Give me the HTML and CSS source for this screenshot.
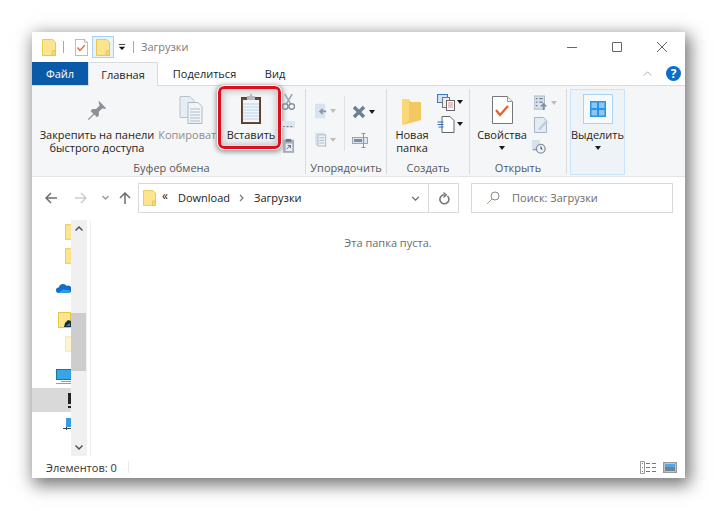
FILE: index.html
```html
<!DOCTYPE html>
<html lang="ru">
<head>
<meta charset="utf-8">
<title>Загрузки</title>
<link rel="stylesheet" href="styles.css">
</head>
<body>
<svg class="defs" width="0" height="0">
  <symbol id="folder" viewBox="0 0 15 18"><path d="M.5.5h11l3 3v14H.5z" fill="#fde58f" stroke="#e9c342"/><path d="M11 12.5h3.5v5H11z" fill="#f6d978" stroke="#e9c342"/></symbol>
  <symbol id="doccheck" viewBox="0 0 21 28"><path d="M.5.5h15l5 5v22H.5z" fill="#fff" stroke="#777"/><path d="M15.5.5v5h5" fill="#eee" stroke="#999"/><path d="M4 14l4 5 8-9" fill="none" stroke="#e8602c" stroke-width="2.2"/></symbol>
</svg>
<div class="window">
  <header class="titlebar">
    <svg class="qa-folder"><use href="#folder"/></svg>
    <span class="qa-sep"></span>
    <svg class="qa-check" viewBox="0 0 21 28"><use href="#doccheck"/></svg>
    <span class="qa-box"><svg class="qa-folder2"><use href="#folder"/></svg></span>
    <svg class="qa-arrow" viewBox="0 0 10 8"><path d="M1 0h8v1H1zM1 3h8L5 7z" fill="#111"/></svg>
    <span class="qa-sep qa-sep2"></span>
    <span class="title">Загрузки</span>
    <div class="controls">
      <svg viewBox="0 0 10 10"><path d="M0 5.5h10" stroke="#666" fill="none"/></svg>
      <svg viewBox="0 0 10 10"><path d="M.5.5h9v9h-9z" stroke="#666" fill="none"/></svg>
      <svg viewBox="0 0 10 10"><path d="M0 0l10 10M10 0L0 10" stroke="#666" fill="none"/></svg>
    </div>
  </header>
  <nav class="tabs">
    <span class="tab file">Файл</span>
    <span class="tab active">Главная</span>
    <span class="tab share">Поделиться</span>
    <span class="tab view">Вид</span>
    <svg class="collapse" viewBox="0 0 10 6"><path d="M.5 5.5L5 1l4.5 4.5" fill="none" stroke="#999"/></svg>
    <span class="help">?</span>
  </nav>
  <section class="ribbon">
    <div class="group g-clip">
      <div class="g-body">
        <div class="btn pin">
          <svg class="big" viewBox="0 0 24 24"><path d="M14 2l8 8-2 1-2-1-4 4v4l-2 2-3-3-6 6-1-1 6-6-3-3 2-2h4l4-4-1-2z" fill="#8a9097"/></svg>
          <span class="lbl">Закрепить на панели<br>быстрого доступа</span>
        </div>
        <div class="btn copy">
          <svg class="big" viewBox="0 0 24 28"><path d="M1 .5h10l4 4v17H1z" fill="#e6edf5" stroke="#b9c3ce"/><path d="M9 6.5h10l4 4v17H9z" fill="#f2f5f8" stroke="#aeb8c3"/><path d="M11 13h10M11 16h10M11 19h10M11 22h10M11 25h10" stroke="#b0bac6"/></svg>
          <span class="lbl dim">Копировать</span>
        </div>
        <div class="btn paste">
          <svg class="big" viewBox="0 0 20 30"><rect x=".5" y="3.5" width="19" height="26" fill="#6e4b33" stroke="#5c3c28"/><rect x="2" y="6" width="16" height="22" fill="#f2f6fc"/><path d="M2 10h16M2 13h16M2 16h16M2 19h16M2 22h16M2 25h16" stroke="#bcd2ec"/><path d="M6 2h3V0h2v2h3v4H6z" fill="#b9bcc0"/></svg>
          <span class="lbl">Вставить</span>
        </div>
        <div class="small-col">
          <svg viewBox="0 0 14 18"><path d="M3 0l6 10M11 0L5 10" stroke="#9aa5b0" stroke-width="1.6" fill="none"/><circle cx="3.5" cy="13.5" r="3" fill="none" stroke="#7d8f9f" stroke-width="1.5"/><circle cx="10.5" cy="13.5" r="3" fill="none" stroke="#7d8f9f" stroke-width="1.5"/></svg>
          <svg viewBox="0 0 14 8"><rect width="14" height="8" fill="#dfe5ec"/><path d="M1 6h2M5 6h2M9 6h2" stroke="#5e6a76"/></svg>
          <svg viewBox="0 0 14 16"><rect x="1" y="2" width="12" height="14" fill="#a4aeb9"/><path d="M4 1h6v3H4z" fill="#6d7884"/><rect x="4" y="6" width="7" height="8" fill="#eef2f6"/><path d="M5 12l4-4M6 8h3v3" stroke="#4f6070" fill="none"/></svg>
        </div>
      </div>
      <div class="g-label">Буфер обмена</div>
      <div class="highlight"></div>
    </div>
    <div class="group g-arr">
      <div class="g-body">
        <div class="arr-col">
          <div class="mini">
            <svg viewBox="0 0 14 17"><rect width="12" height="17" fill="#d7e3f0"/><path d="M13 9H7M9 6L6 9l3 3" stroke="#8b98a6" stroke-width="2" fill="none"/></svg>
            <i class="tri dim-tri"></i>
          </div>
          <div class="mini">
            <svg viewBox="0 0 14 17"><rect width="11" height="15" fill="#d7e3f0"/><rect x="3.500" y="2.500" width="9" height="13" fill="#eef3f8" stroke="#a7b3bf"/><path d="M5 6h6M5 9h6M5 12h6" stroke="#a7b3bf"/></svg>
            <i class="tri dim-tri"></i>
          </div>
        </div>
        <span class="arr-sep"></span>
        <div class="arr-col">
          <div class="mini">
            <svg class="x-icon" viewBox="0 0 14 14"><path d="M2 2l10 10M12 2L2 12" stroke="#6c7f95" stroke-width="3.400"/></svg>
            <i class="tri"></i>
          </div>
          <div class="mini">
            <svg class="rename" viewBox="0 0 16 15"><rect x=".5" y="4.500" width="15" height="6" fill="#dce4ec" stroke="#9aa8b6"/><rect x="2" y="6" width="8" height="3" fill="#7f8e9d"/><path d="M11.500 0v15M9.500.5h4M9.500 14.500h4" stroke="#8896a4"/></svg>
          </div>
        </div>
      </div>
      <div class="g-label">Упорядочить</div>
    </div>
    <div class="group g-new">
      <div class="g-body">
        <div class="btn newf">
          <svg class="big" viewBox="0 0 19 28"><path d="M0 1h7l2 3v19l-8 4-1-1z" fill="#fbd777"/><path d="M7 4h12v18L1 27l6-4z" fill="#f2c85f"/></svg>
          <span class="lbl">Новая<br>папка</span>
        </div>
        <div class="new-col">
          <div class="mini">
            <svg viewBox="0 0 18 17"><rect x=".5" y=".5" width="10" height="8" fill="#cfe2f5" stroke="#3d7ab8"/><rect x="5.500" y="3.500" width="7" height="10" fill="#eee" stroke="#777"/><rect x="9.500" y="6.500" width="8" height="10" fill="#fff" stroke="#666"/><path d="M11 9h5M11 11h5M11 13h5" stroke="#d88"/></svg>
            <i class="tri"></i>
          </div>
          <div class="mini">
            <svg viewBox="0 0 17 17"><path d="M4.500.5h8l4 4v12h-12z" fill="#fff" stroke="#666"/><path d="M0 6h6M0 8.500h6M1 11h5" stroke="#2e6eb0"/></svg>
            <i class="tri"></i>
          </div>
        </div>
      </div>
      <div class="g-label">Создать</div>
    </div>
    <div class="group g-open">
      <div class="g-body">
        <div class="btn props">
          <svg class="big" viewBox="0 0 21 28"><use href="#doccheck"/></svg>
          <span class="lbl">Свойства</span>
          <i class="tri"></i>
        </div>
        <div class="open-col">
          <div class="mini">
            <svg viewBox="0 0 16 16"><rect width="12" height="15" fill="#d9e2ec" stroke="#a5b1bd"/><path d="M2 3h2M2 7h2M2 11h2M6 3h4M6 7h4" stroke="#6f7f8f" stroke-width="1.500"/><path d="M11 16v-6M8 12l3-3 3 3" stroke="#7f8f9f" stroke-width="2" fill="none"/></svg>
            <i class="tri dim-tri"></i>
          </div>
          <div class="mini">
            <svg viewBox="0 0 14 16"><path d="M.5.5h9l3 3v12H.5z" fill="#e3ecf5" stroke="#a8b5c2"/><path d="M4 12l8-9 2 2-8 8z" fill="#c3ccd5"/></svg>
          </div>
          <div class="mini hist">
            <svg viewBox="0 0 16 16"><rect width="9" height="12" fill="#d7e1eb"/><circle cx="10" cy="10" r="5" fill="#eef2f6" stroke="#8795a3" stroke-width="1.500"/><path d="M10 7v3l2 1M1 11h5" stroke="#7a8896"/></svg>
          </div>
        </div>
      </div>
      <div class="g-label">Открыть</div>
    </div>
    <div class="select-btn">
      <span class="sel-box">
        <svg viewBox="0 0 16 16"><rect width="16" height="16" fill="#2b94e4"/><path d="M1.500 1.500h5.500V7H1.500zM9 1.500h5.500V7H9zM1.500 9H7v5.500H1.500zM9 9h5.500v5.500H9z" fill="#8cc6f2"/></svg>
      </span>
      <span class="lbl">Выделить</span>
      <i class="tri"></i>
    </div>
  </section>
  <div class="navbar">
    <svg class="nav-i back" viewBox="0 0 12 12"><path d="M12 6H1.500M6 1L1 6l5 5" fill="none" stroke="#6d6d6d" stroke-width="1.500"/></svg>
    <svg class="nav-i fwd" viewBox="0 0 12 12"><path d="M0 6h10.500M6 1l5 5-5 5" fill="none" stroke="#ccc" stroke-width="1.500"/></svg>
    <svg class="nav-d" viewBox="0 0 7 5"><path d="M.5 1l3 3 3-3" fill="none" stroke="#999" stroke-width="1.300"/></svg>
    <svg class="nav-i up" viewBox="0 0 12 12"><path d="M6 12V1.500M1 6l5-5 5 5" fill="none" stroke="#6d6d6d" stroke-width="1.500"/></svg>
    <div class="address">
      <svg class="addr-f"><use href="#folder"/></svg>
      <span class="crumb-more">«</span>
      <span class="crumb">Download</span>
      <svg class="crumb-sep" viewBox="0 0 5 8"><path d="M1 1l3 3-3 3" fill="none" stroke="#777" stroke-width="1.200"/></svg>
      <span class="crumb">Загрузки</span>
      <svg class="addr-d" viewBox="0 0 10 6"><path d="M1 1l4 4 4-4" fill="none" stroke="#666" stroke-width="1.500"/></svg>
      <span class="refresh">
        <svg viewBox="0 0 12 13"><path d="M9.500 4A4.500 4.500 0 1 1 5 3H7" fill="none" stroke="#777" stroke-width="1.600"/><path d="M5.500.5L8.500 3 5.500 5.500" fill="none" stroke="#777" stroke-width="1.200"/></svg>
      </span>
    </div>
    <div class="search">
      <svg viewBox="0 0 14 14"><circle cx="9" cy="5" r="4" fill="none" stroke="#8a8a8a"/><path d="M6 8l-5 5" stroke="#b5a07a"/></svg>
      <span class="search-text">Поиск: Загрузки</span>
    </div>
  </div>
  <main class="main">
    <aside class="sidebar">
      <div class="tree">
        <div class="row"><svg class="t-folder"><use href="#folder"/></svg></div>
        <div class="row"><svg class="t-folder"><use href="#folder"/></svg></div>
        <div class="row gap"><svg class="t-cloud" viewBox="0 0 17 12"><path d="M3 11a3 3 0 0 1 0-6 5 5 0 0 1 9-2 4 4 0 0 1 3 8z" fill="#0f6fc6"/><path d="M2 11l6-4 8 1v3z" fill="#2c9bea"/></svg></div>
        <div class="row gap"><svg class="t-shared" viewBox="0 0 13 16"><path d="M.5.5h12v15H.5z" fill="#fde58f" stroke="#e9c342"/><path d="M6 15l1-4 3-3 3 1v6z" fill="#1a2a3a"/><path d="M8 14l4-3v3z" fill="#2a8ee0"/></svg></div>
        <div class="row"><svg class="t-folder pale"><use href="#folder"/></svg></div>
        <div class="row gap"><svg class="t-pc" viewBox="0 0 15 15"><rect x=".5" y=".5" width="18" height="10" fill="#35a7e8" stroke="#1f6f9f"/><path d="M5 12h10v1H5zM0 14h15v1H0z" fill="#8fa0b0"/></svg></div>
        <div class="row sel"><span class="t-dl"></span></div>
        <div class="row"><svg class="t-net" viewBox="0 0 8 13"><path d="M3 0h5v9H3z" fill="#3a9be0"/><path d="M0 10h8v1H0zM3 9h1v3H3z" fill="#444"/></svg></div>
      </div>
      <div class="scrollbar">
        <svg class="sb-up" viewBox="0 0 8 5"><path d="M.5 4.500L4 1l3.500 3.500" fill="none" stroke="#555" stroke-width="1.500"/></svg>
        <span class="thumb"></span>
        <svg class="sb-down" viewBox="0 0 8 5"><path d="M.5.5L4 4 7.500.5" fill="none" stroke="#555" stroke-width="1.500"/></svg>
      </div>
    </aside>
    <div class="content">Эта папка пуста.</div>
  </main>
  <footer class="status">
    <span class="count">Элементов: 0</span>
    <span class="st-sep"></span>
    <svg class="st-details" viewBox="0 0 16 13"><path d="M.5.500h4v12h-4z" fill="#fff" stroke="#999"/><path d="M2 2h1v1H2z" fill="#3a7"/><path d="M2 6h1v1H2z" fill="#39e"/><path d="M2 10h1v1H2z" fill="#e33"/><path d="M6 2.500h4M12 2.500h4M6 6.500h4M12 6.500h4M6 10.500h4M12 10.500h4" stroke="#777"/></svg>
    <svg class="st-large" viewBox="0 0 14 11"><rect x=".75" y=".75" width="12.500" height="9.500" fill="#eaf3fb" stroke="#999" stroke-width="1.500"/><rect x="2" y="2" width="10" height="3" fill="#55a5e8"/><rect x="2" y="5" width="10" height="4" fill="#6b8592"/></svg>
  </footer>
</div>
</body>
</html>
```
FILE: styles.css
```css
* { box-sizing: border-box; }
html, body { margin: 0; height: 100%; background: #fff; overflow: hidden; }
body { padding: 32px 0 0 32px; font-family: "Open Sans", "Noto Sans", sans-serif; font-size: 11px; color: #1e1e1e; }
.defs { position: absolute; }
svg { display: block; flex: none; }
.window { width: 653px; height: 446px; background: #fff; display: flex; flex-direction: column; box-shadow: 3px 5px 16px 2px rgba(0,0,0,.55); }

.titlebar { height: 30px; display: flex; align-items: center; padding: 0 0 0 10px; flex: none; }
.qa-folder { width: 14px; height: 17px; }
.qa-sep { width: 1px; height: 12px; background: #a8a8a8; margin-left: 7px; }
.qa-check { width: 13px; height: 17px; margin-left: 11px; }
.qa-box { width: 22px; height: 22px; margin-left: 4px; border: 1px solid #a6d0f5; background: #e8f3fd; display: flex; align-items: center; justify-content: center; }
.qa-folder2 { width: 14px; height: 17px; }
.qa-arrow { width: 8px; height: 7px; margin-left: 4px; }
.qa-sep2 { margin-left: 7px; }
.title { margin-left: 7px; margin-top: -2px; color: #7b7b7b; font-size: 11px; }
.controls { margin-left: auto; display: flex; gap: 35px; padding-right: 18px; }
.controls svg { width: 10px; height: 10px; }

.tabs { height: 24px; display: flex; align-items: center; position: relative; flex: none; border-bottom: 1px solid #dadbdc; }
.tab { height: 23px; display: flex; align-items: center; justify-content: center; }
.file { width: 56px; background: #0b5aa8; color: #fff; }
.active { width: 70px; height: 24px; background: #f5f6f7; border: 1px solid #dadbdc; border-bottom: 0; margin-bottom: -1px; }
.share { margin-left: 15px; width: 63px; }
.view { margin-left: 29px; width: 20px; }
.collapse { width: 9px; height: 5px; margin-left: auto; margin-right: 14px; }
.help { width: 15px; height: 15px; border-radius: 50%; background: #0a6fc9; color: #fff; font: bold 12px/15px "Open Sans", sans-serif; text-align: center; margin-right: 4px; }

.ribbon { height: 91px; background: #f5f6f7; display: flex; flex: none; border-bottom: 1px solid #e4e5e6; padding: 3px 0 2px; position: relative; }
.group { display: flex; flex-direction: column; border-right: 1px solid #d9dcdf; position: relative; flex: none; }
.g-body { height: 70px; display: flex; flex: none; }
.g-label { height: 15px; text-align: center; color: #55595e; line-height: 18px; }
.g-clip { width: 274px; padding-left: 6px; }
.g-arr { width: 81px; }
.g-new { width: 83px; }
.g-open { width: 97px; }

.btn { display: flex; flex-direction: column; align-items: center; flex: none; }
.big { height: 28px; margin-top: 7px; margin-bottom: 4px; }
.lbl { line-height: 13px; text-align: center; white-space: nowrap; }
.dim { color: #8e8e8e; }
.pin { width: 118px; }
.pin .big { width: 22px; height: 22px; margin-top: 10px; margin-bottom: 7px; }
.copy { width: 69px; }
.copy .big { width: 24px; }
.paste { width: 52px; z-index: 2; }
.paste .big { width: 20px; height: 30px; margin-top: 5px; margin-bottom: 4px; }
.small-col { width: 14px; margin-left: 5px; padding-top: 5px; display: flex; flex-direction: column; gap: 10px; z-index: 3; }
.small-col svg { width: 13px; height: auto; }
.highlight { position: absolute; left: 186px; top: -3px; width: 63px; height: 63px; border: 3px solid #e00d1c; border-radius: 6px; outline: 1px solid #fff; box-shadow: 0 1px 5px 2px rgba(0,0,0,.4), inset 0 0 7px 2px rgba(0,0,0,.22), inset 0 0 0 1px #fff; z-index: 2; }

.arr-col { display: flex; flex-direction: column; gap: 12px; padding-top: 13px; width: 38px; padding-left: 9px; }
.g-arr .arr-col + .arr-sep + .arr-col { padding-left: 7px; padding-top: 14px; gap: 12px; }
.arr-sep { width: 1px; height: 55px; background: #dfe2e5; margin-top: 7px; }
.mini { display: flex; align-items: center; gap: 3px; height: 17px; }
.mini svg { width: 12px; height: 16px; }
.tri { display: block; width: 0; height: 0; border: 3px solid transparent; border-top: 4px solid #1a1a1a; border-bottom: 0; flex: none; }
.dim-tri { border-top-color: #bdbdbd; }
.mini .x-icon { width: 14px; height: 14px; }
.mini .rename { width: 16px; height: 15px; }

.newf { width: 50px; }
.newf .big { width: 19px; margin-left: -1px; margin-top: 9px; margin-bottom: 2px; }
.new-col { display: flex; flex-direction: column; gap: 6px; padding-top: 5px; }
.new-col .mini svg { width: 18px; height: 17px; }
.new-col .mini { gap: 2px; height: 16px; }

.props { width: 64px; }
.props .big { width: 21px; }
.props .tri { margin-top: 5px; }
.open-col { display: flex; flex-direction: column; gap: 5px; padding-top: 5px; }
.open-col .mini svg { width: 14px; height: 16px; }
.hist svg { margin-left: -2px; }

.select-btn { width: 55px; margin-left: 3px; border: 1px solid #cbe4fa; background: #eef3f8; display: flex; flex-direction: column; align-items: center; height: 86px; }
.sel-box { width: 30px; height: 30px; margin-top: 4px; margin-bottom: 4px; border: 1px solid #a6d3f8; background: #f7fafd; display: flex; align-items: center; justify-content: center; }
.sel-box svg { width: 16px; height: 16px; }
.select-btn .tri { margin-top: 5px; }

.navbar { height: 43px; padding: 6px 12px 0 13px; display: flex; align-items: flex-start; flex: none; }
.nav-i { width: 12px; height: 12px; margin-top: 9px; }
.fwd { margin-left: 18px; }
.nav-d { width: 7px; height: 5px; margin: 12px 0 0 15px; }
.up { margin-left: 10px; }
.address { width: 321px; height: 30px; margin-left: 7px; border: 1px solid #d9d9d9; display: flex; align-items: center; padding-left: 4px; }
.addr-f { width: 13px; height: 16px; }
.crumb-more { margin-left: 6px; font-size: 12px; margin-top: -5px; }
.crumb { margin-left: 10px; margin-top: -2px; color: #222; }
.crumb-sep { width: 5px; height: 8px; margin-left: 9px; }
.crumb-sep + .crumb { margin-left: 10px; }
.addr-d { width: 9px; height: 5px; margin-left: auto; margin-right: 8px; }
.refresh { width: 30px; height: 28px; border-left: 1px solid #d9d9d9; display: flex; align-items: center; justify-content: center; }
.refresh svg { width: 12px; height: 13px; }
.search { width: 202px; height: 30px; margin-left: 12px; border: 1px solid #d9d9d9; display: flex; align-items: center; padding-left: 14px; color: #6d6d6d; gap: 12px; }
.search svg { width: 14px; height: 14px; }
.search-text { margin-top: -2px; }

.main { flex: 1; display: flex; min-height: 0; }
.sidebar { width: 59px; display: flex; border-right: 1px solid #f0f0f0; flex: none; }
.tree { width: 39px; overflow: hidden; flex: none; }
.row { height: 24px; display: flex; align-items: center; justify-content: flex-end; }
.gap { margin-top: 8px; }
.sel { background: #d9d9d9; }
.t-folder { width: 13px; height: 16px; margin-right: -7px; }
.pale { opacity: .45; }
.t-cloud { width: 15px; height: 11px; }
.t-shared { width: 13px; height: 16px; }
.t-pc { width: 15px; height: 15px; }
.t-dl { width: 3px; height: 15px; background: linear-gradient(#222 75%, #d9d9d9 75%, #d9d9d9 85%, #222 85%); }
.t-net { width: 8px; height: 13px; }
.scrollbar { width: 16px; margin-right: 3px; background: #f0f0f0; position: relative; flex: none; }
.sb-up, .sb-down { position: absolute; left: 4px; width: 8px; height: 5px; }
.sb-up { top: 6px; }
.sb-down { bottom: 6px; }
.thumb { position: absolute; left: 0; top: 93px; width: 15px; height: 58px; background: #cdcdcd; }
.content { flex: 1; text-align: center; color: #6d6d6d; padding-top: 15px; }

.status { height: 22px; display: flex; align-items: center; padding: 0 8px 0 14px; flex: none; color: #333; }
.count { width: 82px; }
.st-sep { width: 1px; height: 12px; background: #eaeaea; }
.st-details { width: 16px; height: 13px; margin-left: auto; }
.st-large { width: 14px; height: 11px; margin-left: 7px; }
```
